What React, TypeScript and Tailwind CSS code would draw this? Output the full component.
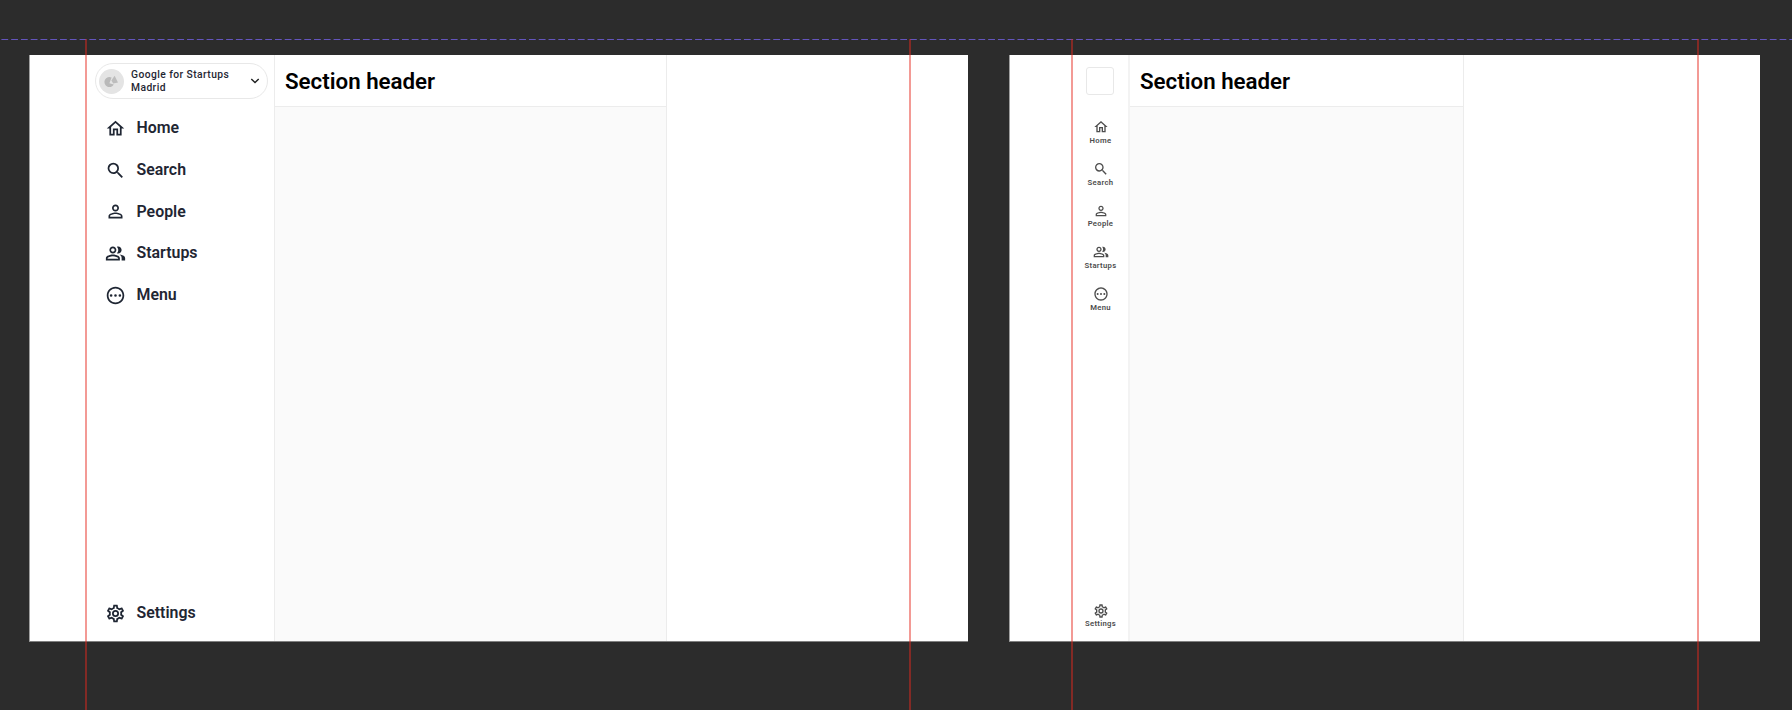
import type { ReactNode } from "react";

type IconProps = { className?: string };

const icons: Record<string, ReactNode> = {
  Home: <path d="M12 5.69l5 4.5V18h-2v-6H9v6H7v-7.81l5-4.5M12 3L2 12h3v8h6v-6h2v6h6v-8h3L12 3z" />,
  Search: (
    <path d="M15.5 14h-.79l-.28-.27A6.471 6.471 0 0 0 16 9.5 6.5 6.5 0 1 0 9.5 16c1.61 0 3.09-.59 4.23-1.57l.27.28v.79l5 4.99L20.49 19l-4.99-5zm-6 0C7.01 14 5 11.99 5 9.5S7.01 5 9.5 5 14 7.01 14 9.5 11.99 14 9.5 14z" />
  ),
  People: (
    <path d="M12 5.9a2.1 2.1 0 1 1 0 4.2 2.1 2.1 0 0 1 0-4.2m0 9c2.97 0 6.1 1.46 6.1 2.1v1.1H5.9V17c0-.64 3.13-2.1 6.1-2.1M12 4C9.79 4 8 5.79 8 8s1.79 4 4 4 4-1.79 4-4-1.79-4-4-4zm0 9c-2.67 0-8 1.34-8 4v3h16v-3c0-2.66-5.33-4-8-4z" />
  ),
  Startups: (
    <path d="M16.67 13.13C18.04 14.06 19 15.32 19 17v3h4v-3c0-2.18-3.57-3.47-6.33-3.87zM15 12c2.21 0 4-1.79 4-4s-1.79-4-4-4c-.47 0-.91.1-1.33.24a5.98 5.98 0 0 1 0 7.52c.42.14.86.24 1.33.24zM9 12c2.21 0 4-1.79 4-4s-1.79-4-4-4-4 1.79-4 4 1.79 4 4 4zm0-6c1.1 0 2 .9 2 2s-.9 2-2 2-2-.9-2-2 .9-2 2-2zm0 7c-2.67 0-8 1.34-8 4v3h16v-3c0-2.66-5.33-4-8-4zm6 5H3v-.99C3.2 16.29 6.3 15 9 15s5.8 1.29 6 2v1z" />
  ),
  Menu: (
    <path d="M12 2C6.48 2 2 6.48 2 12s4.48 10 10 10 10-4.48 10-10S17.52 2 12 2zm0 18c-4.42 0-8-3.58-8-8s3.58-8 8-8 8 3.58 8 8-3.58 8-8 8zM7 10.5a1.5 1.5 0 1 0 0 3 1.5 1.5 0 0 0 0-3zm5 0a1.5 1.5 0 1 0 0 3 1.5 1.5 0 0 0 0-3zm5 0a1.5 1.5 0 1 0 0 3 1.5 1.5 0 0 0 0-3z" />
  ),
  Settings: (
    <path d="M19.43 12.98c.04-.32.07-.64.07-.98 0-.34-.03-.66-.07-.98l2.11-1.65c.19-.15.24-.42.12-.64l-2-3.46a.5.5 0 0 0-.61-.22l-2.49 1c-.52-.4-1.08-.73-1.69-.98l-.38-2.65A.488.488 0 0 0 14 2h-4c-.25 0-.46.18-.49.42l-.38 2.65c-.61.25-1.17.59-1.69.98l-2.49-1a.5.5 0 0 0-.61.22l-2 3.46c-.13.22-.07.49.12.64l2.11 1.65c-.04.32-.07.65-.07.98s.03.66.07.98l-2.11 1.65c-.19.15-.24.42-.12.64l2 3.46a.5.5 0 0 0 .61.22l2.49-1c.52.4 1.08.73 1.69.98l.38 2.65c.03.24.24.42.49.42h4c.25 0 .46-.18.49-.42l.38-2.65c.61-.25 1.17-.59 1.69-.98l2.49 1a.5.5 0 0 0 .61-.22l2-3.46c.12-.22.07-.49-.12-.64l-2.11-1.65zm-1.98-1.71c.04.31.05.52.05.73 0 .21-.02.43-.05.73l-.14 1.13.89.7 1.08.84-.7 1.21-1.27-.51-1.04-.42-.9.68c-.43.32-.84.56-1.25.73l-1.06.43-.16 1.13-.2 1.35h-1.4l-.19-1.35-.16-1.13-1.06-.43c-.43-.18-.83-.41-1.23-.71l-.91-.7-1.06.43-1.27.51-.7-1.21 1.08-.84.89-.7-.14-1.13c-.03-.31-.05-.54-.05-.74s.02-.43.05-.73l.14-1.13-.89-.7-1.08-.84.7-1.21 1.27.51 1.04.42.9-.68c.43-.32.84-.56 1.25-.73l1.06-.43.16-1.13.2-1.35h1.39l.19 1.35.16 1.13 1.06.43c.43.18.83.41 1.23.71l.91.7 1.06-.43 1.27-.51.7 1.21-1.07.85-.89.7.14 1.13zM12 8a4 4 0 1 0 0 8 4 4 0 0 0 0-8zm0 6a2 2 0 1 1 0-4 2 2 0 0 1 0 4z" />
  ),
};

const mainItems = ["Home", "Search", "People", "Startups", "Menu"];

function Icon({ name, className }: IconProps & { name: string }) {
  return (
    <svg viewBox="0 0 24 24" fill="currentColor" className={className}>
      {icons[name]}
    </svg>
  );
}

function WideItem({ name }: { name: string }) {
  return (
    <a className="flex h-[41.7px] items-center gap-[10.5px] pl-[20px] text-[15.9px] font-semibold text-[#1f2633]">
      <Icon name={name} className="size-[21px]" />
      {name}
    </a>
  );
}

function CompactItem({ name }: { name: string }) {
  return (
    <a className="flex h-[41.7px] flex-col items-center pl-[1px] text-[7.7px] leading-[9px] font-semibold tracking-[0.3px] text-[#4d4d4d]">
      <Icon name={name} className="mb-[0.5px] size-[16px]" />
      {name}
    </a>
  );
}

function Content({ className }: { className: string }) {
  return (
    <main className={`flex flex-col border-r border-[#ececec] ${className}`}>
      <header className="flex h-[52px] items-center border-b border-[#ececec] pt-[2px] pl-[10px] text-[22.3px] font-semibold text-black">
        Section header
      </header>
      <section className="flex-1 bg-[#fafafa]" />
    </main>
  );
}

function AccountPicker() {
  return (
    <button className="mt-[8px] ml-[10px] flex h-[36px] w-[173px] items-center rounded-full border border-[#e8e8e8] pl-[3px] text-left">
      <svg viewBox="0 0 25 25" className="size-[25px]">
        <circle cx="12.5" cy="12.5" r="12.5" fill="#e4e4e4" />
        <path d="M12.6 8.6a5 5 0 1 0 2.2 6.9l-4.4-1.3z" fill="#b9b9b9" />
        <path d="M15.6 6.8l3.4 6.8-4.8.9-1.8-3z" fill="#bdbdbd" />
      </svg>
      <span className="ml-[7px] w-[115px] pt-[1px] text-[10.3px] leading-[12.5px] font-medium tracking-[0.42px] text-[#1f2633]">
        Google for Startups
        <br />
        Madrid
      </span>
      <svg viewBox="0 0 10 6" className="ml-[3.5px] h-[6px] w-[10px]">
        <path d="M1.3 1l3.7 3.6L8.7 1" fill="none" stroke="#1f2020" strokeWidth="1.4" />
      </svg>
    </button>
  );
}

function Guide({ className }: { className: string }) {
  return <div className={`absolute top-[39px] bottom-0 w-[2px] bg-[rgba(230,40,30,0.47)] ${className}`} />;
}

export default function App() {
  return (
    <div className="relative flex h-[710px] w-[1792px] items-start overflow-hidden bg-[#2c2c2c] pt-[55px] font-['Roboto',sans-serif]">
      <div className="ml-[29px] flex h-[587px] w-[939px] border-b border-l border-b-[#808080] border-l-[#a0a0a0] bg-white pl-[55px]">
        <nav className="flex w-[190px] flex-col border-r border-[#ececec]">
          <AccountPicker />
          <div className="mt-[8.5px] flex flex-col">
            {mainItems.map((name) => (
              <WideItem key={name} name={name} />
            ))}
          </div>
          <div className="mt-auto mb-[7px]">
            <WideItem name="Settings" />
          </div>
        </nav>
        <Content className="w-[392px]" />
      </div>
      <div className="ml-[41px] flex h-[587px] w-[751px] border-b border-l border-b-[#808080] border-l-[#a0a0a0] bg-white pl-[62px]">
        <nav className="flex w-[58px] flex-col border-r-2 border-[#f3f3f3]">
          <div className="mt-[12px] ml-[14px] size-[28px] rounded-[3px] border border-[#e8e8e8]" />
          <div className="mt-[24.4px] flex flex-col">
            {mainItems.map((name) => (
              <CompactItem key={name} name={name} />
            ))}
          </div>
          <div className="mt-auto mb-[-3.4px]">
            <CompactItem name="Settings" />
          </div>
        </nav>
        <Content className="w-[334px]" />
      </div>
      <svg className="absolute top-[39px] left-0 h-[1px] w-[1792px]">
        <line x1="1.4" y1="0.5" x2="1792" y2="0.5" stroke="#6455bd" strokeDasharray="6.8 2.97" />
      </svg>
      <Guide className="left-[85px]" />
      <Guide className="left-[909px]" />
      <Guide className="left-[1071px]" />
      <Guide className="left-[1697px]" />
    </div>
  );
}
